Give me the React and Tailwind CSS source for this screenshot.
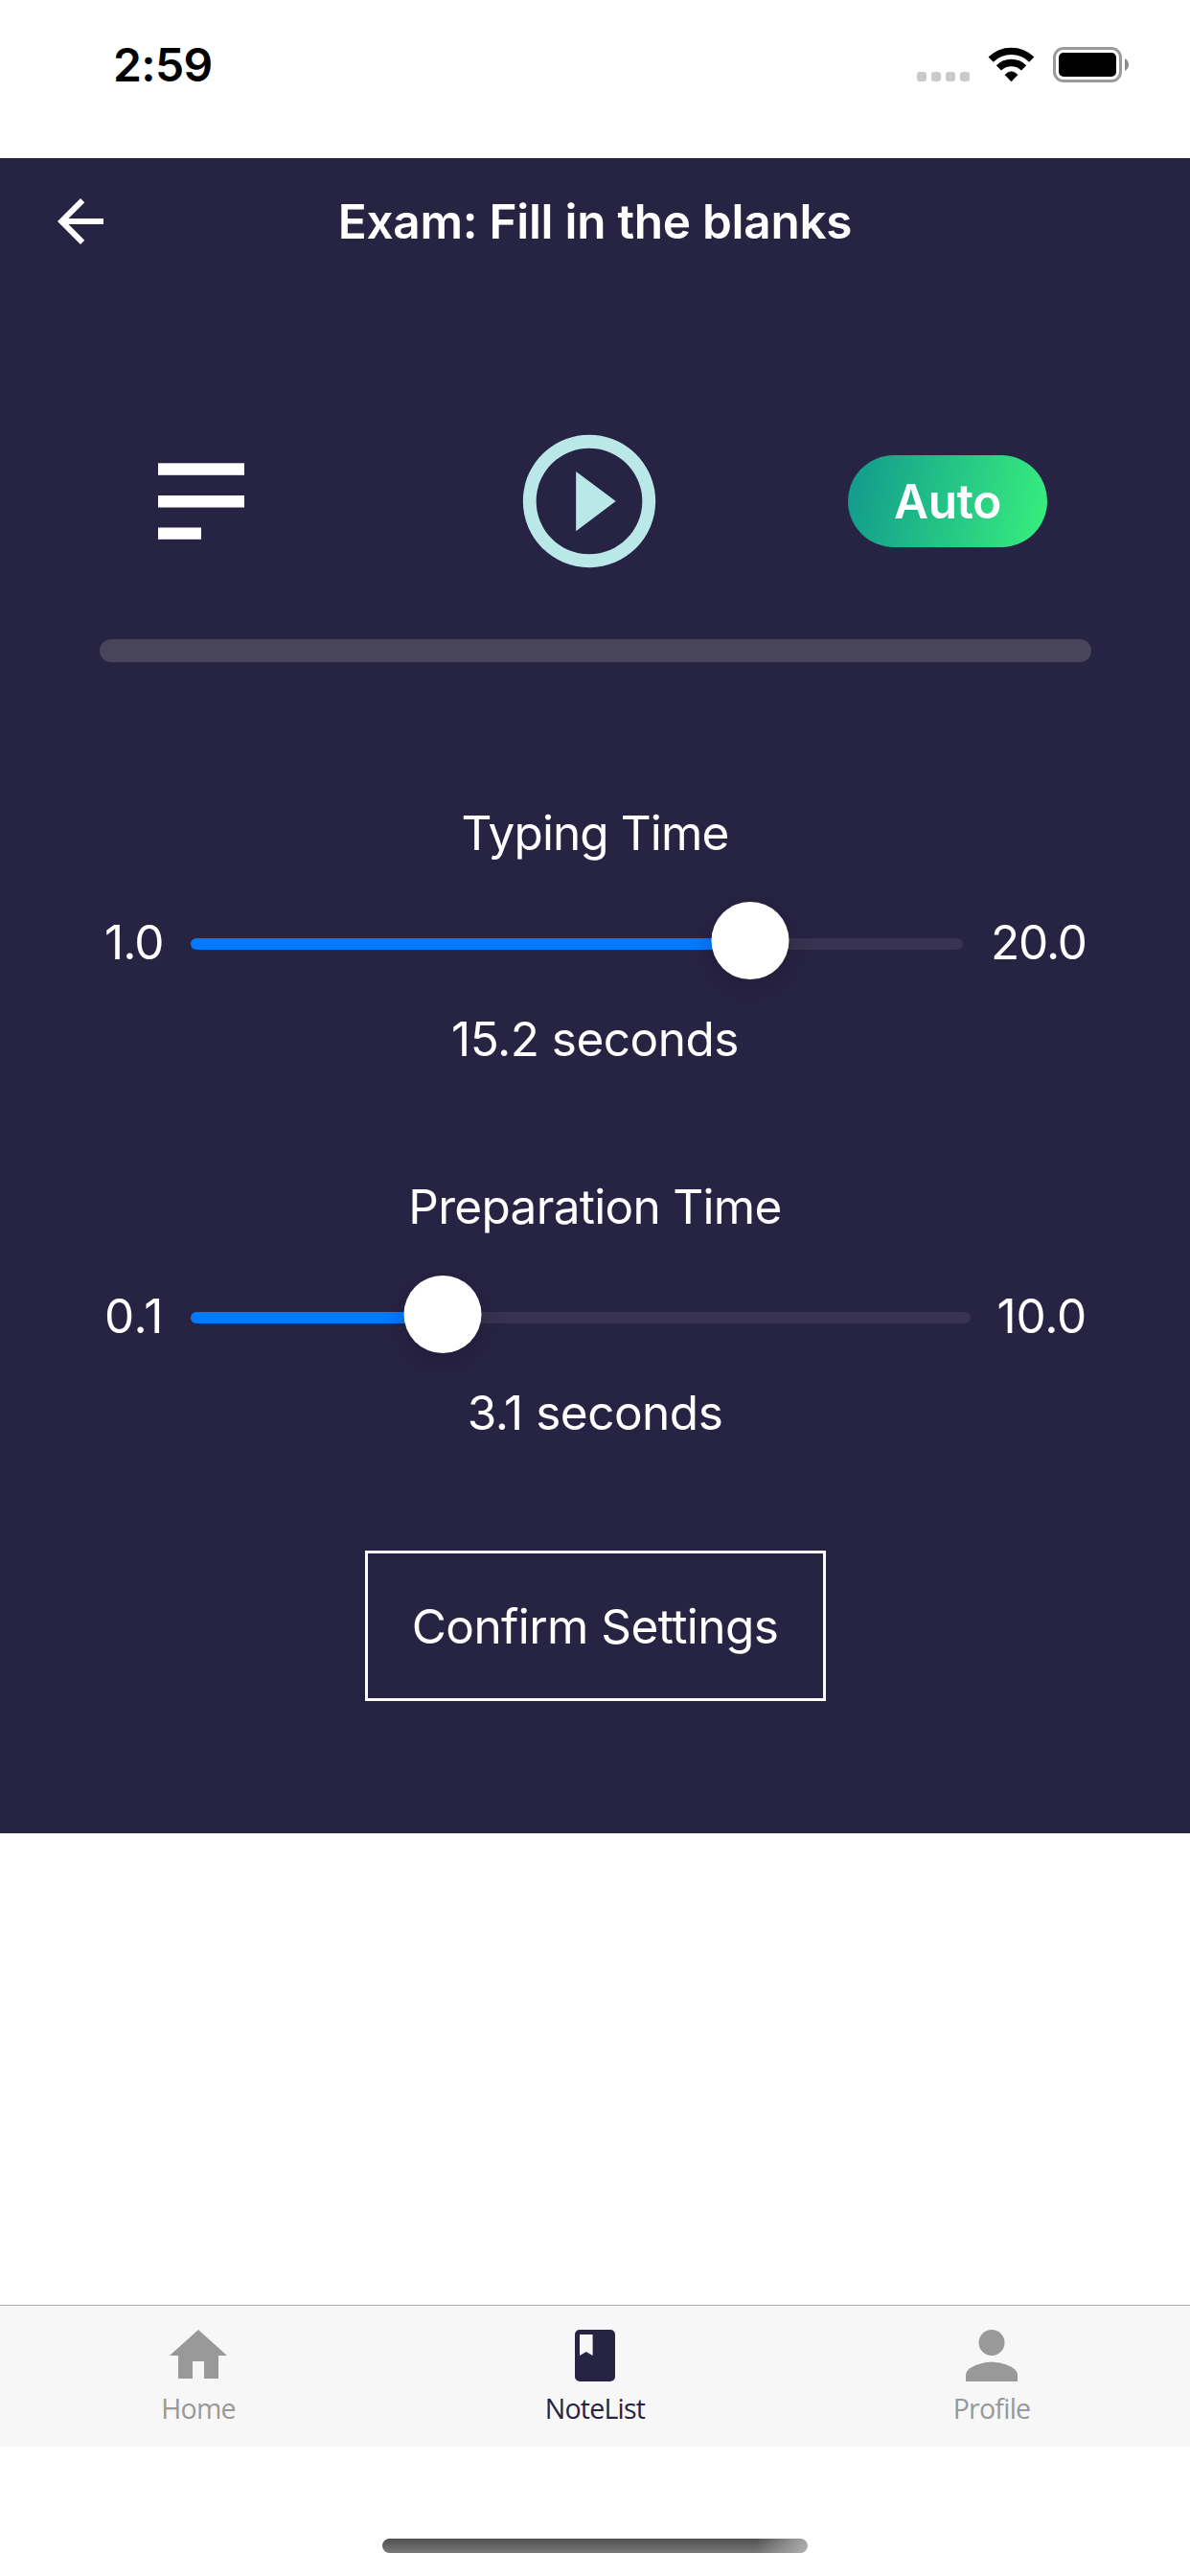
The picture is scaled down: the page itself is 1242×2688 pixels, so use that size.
import { MdArrowBack, MdHome, MdPlayCircleOutline } from "react-icons/md";

function StatusBar() {
  return (
    <div className="flex h-[165px] shrink-0 items-start pl-[118px] pr-[64px]">
      <div className="mt-[38px] text-[48px] font-semibold leading-[60px] tracking-[-0.6px] text-black">2:59</div>
      <div className="ml-auto mt-[75px] flex gap-[5px]">
        {[0, 1, 2, 3].map((i) => (
          <span key={i} className="size-[10px] rounded-[3px] bg-[#cacaca]" />
        ))}
      </div>
      <svg className="ml-[19px] mt-[49px]" width="49" height="37" viewBox="0 0 49 37">
        <g fill="none" stroke="#000" strokeWidth="7.4">
          <path d="M3.2 13.1A30.4 30.4 0 0 1 45.8 13.1" />
          <path d="M11.4 21.9A18.6 18.6 0 0 1 37.6 21.9" />
        </g>
        <path d="M24.5 36l-6.6-6.9q6.6-6.8 13.2 0z" fill="#000" stroke="#000" strokeLinejoin="round" strokeWidth="0.6" />
      </svg>
      <svg className="ml-[19px] mt-[49px]" width="79" height="37" viewBox="0 0 79 37">
        <rect x="1.5" y="1.5" width="69" height="34" rx="9.5" fill="none" stroke="#9a9a9a" strokeWidth="3" />
        <rect x="6" y="6" width="60" height="25" rx="5" fill="#000" />
        <path d="M75 12c5.3 2.6 5.3 10.4 0 13z" fill="#8c8c8c" />
      </svg>
    </div>
  );
}

function Header() {
  return (
    <div className="grid h-[132px] grid-cols-[120px_1fr_120px] items-center">
      <MdArrowBack className="ml-[48px] size-[72px]" />
      <h1 className="text-center text-[49.5px] font-semibold leading-[60px] tracking-[-0.27px]">Exam: Fill in the blanks</h1>
    </div>
  );
}

function Slider({ title, titleClass, min, minClass, max, maxClass, value, percent }) {
  return (
    <section className="flex flex-col text-[49.5px] leading-[60px]">
      <h2 className={"text-center " + titleClass}>{title}</h2>
      <div className="mt-[54px] flex h-[60px] items-center pl-[109px] pr-[108px]">
        <span className={"w-[90px] shrink-0 " + minClass}>{min}</span>
        <div className="relative mt-[4px] h-[12px] flex-1 rounded-full bg-[#373350]">
          <div className="h-full rounded-full bg-[#007aff]" style={{ width: `${percent}%` }} />
          <div
            className="absolute top-[-38px] size-[81px] -translate-x-1/2 rounded-full bg-white shadow-[0_9px_24px_rgba(30,15,35,0.28)]"
            style={{ left: `${percent}%` }}
          />
        </div>
        <span className={"shrink-0 text-right " + maxClass}>{max}</span>
      </div>
      <p className="mt-[41px] text-center tracking-[-0.5px]">{value}</p>
    </section>
  );
}

function Tab({ label, color, children }) {
  return (
    <div className={"flex flex-1 flex-col items-center pt-[16px] " + color}>
      {children}
      <span className="-mt-px font-['Open_Sans',sans-serif] text-[28.5px] leading-[40px] tracking-[-0.75px]">{label}</span>
    </div>
  );
}

export default function App() {
  return (
    <div className="flex h-[2688px] w-[1242px] flex-col overflow-hidden bg-white font-['Inter',sans-serif]">
      <StatusBar />
      <main className="flex h-[1748px] shrink-0 flex-col bg-[#272343] text-white">
        <Header />
        <div className="mt-[143px] flex h-[166px] items-center pl-[165px] pr-[149px]">
          <svg width="90" height="80" viewBox="0 0 90 80" fill="currentColor">
            <rect y="0.3" width="90" height="12.5" />
            <rect y="34" width="90" height="12.5" />
            <rect y="67.5" width="45" height="12.3" />
          </svg>
          <MdPlayCircleOutline className="ml-[277px] size-[166px] text-[#bae8e8]" />
          <button className="ml-auto h-[96px] w-[208px] rounded-full bg-[linear-gradient(101deg,#11998e,#38ef7d)] text-[49.5px] font-semibold leading-[60px] tracking-[-0.4px]">
            Auto
          </button>
        </div>
        <div className="ml-[104px] mr-[103px] mt-[61px] h-[24px] rounded-full bg-[#484459]" />
        <div className="mt-[148px]">
          <Slider
            title="Typing Time"
            titleClass="tracking-[-0.9px]"
            min="1.0"
            minClass="tracking-[-1px]"
            max="20.0"
            maxClass="w-[129px] tracking-[-1.1px]"
            value="15.2 seconds"
            percent={72.4}
          />
        </div>
        <div className="mt-[115px]">
          <Slider
            title="Preparation Time"
            titleClass="tracking-[-0.7px]"
            min="0.1"
            minClass="tracking-[0.6px]"
            max="10.0"
            maxClass="w-[121px] tracking-[-0.2px]"
            value="3.1 seconds"
            percent={32.31}
          />
        </div>
        <button className="mx-auto mt-[114px] h-[157px] w-[481px] border-[3px] border-white text-[49.5px] leading-[60px] tracking-[-0.56px]">
          Confirm Settings
        </button>
      </main>
      <div className="flex-1" />
      <nav className="flex h-[148px] shrink-0 border-t border-[#b2b2b2] bg-[#f7f7f7]">
        <Tab label="Home" color="text-[#999999]">
          <MdHome className="size-[72px]" />
        </Tab>
        <Tab label="NoteList" color="text-[#272343]">
          <svg className="size-[72px]" viewBox="0 0 72 72" fill="currentColor">
            <path fillRule="evenodd" d="M20 9h32a5 5 0 0 1 5 5v44a5 5 0 0 1-5 5H20a5 5 0 0 1-5-5V14a5 5 0 0 1 5-5zM20 14v22l6.8-4 6.8 4V14z" />
          </svg>
        </Tab>
        <Tab label="Profile" color="text-[#999999]">
          <svg className="size-[72px]" viewBox="0 0 512 512" fill="currentColor">
            <circle cx="256" cy="160" r="96" />
            <path d="M256 304c-63.6 0-192 32.4-192 96v48h384v-48c0-63.6-128.4-96-192-96z" />
          </svg>
        </Tab>
      </nav>
      <div className="flex h-[135px] shrink-0 justify-center pt-[96px]">
        <div className="h-[15px] w-[444px] rounded-full bg-[linear-gradient(90deg,transparent_88%,rgba(190,190,190,0.8)),linear-gradient(180deg,#505050,#787878)]" />
      </div>
    </div>
  );
}
